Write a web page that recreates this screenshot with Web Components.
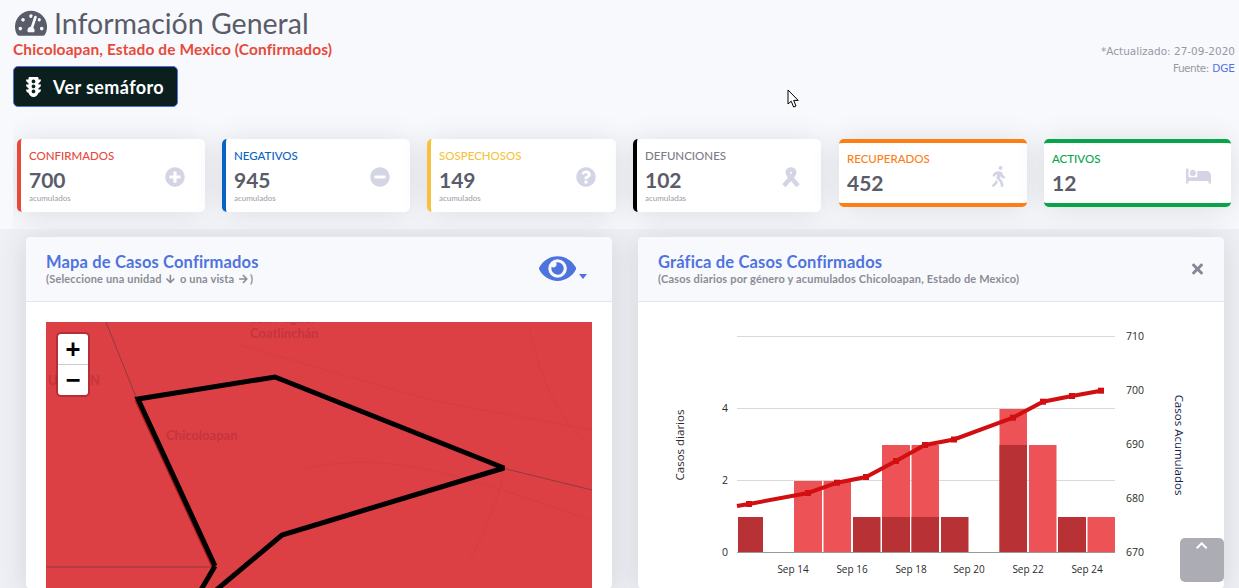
<!DOCTYPE html>
<html lang="es">
<head>
<meta charset="utf-8">
<title>Información General</title>
<style>
  html, body { margin: 0; height: 588px; overflow: hidden; }
  body { background: #f8f9fd; font-family: Lato, "Noto Sans", sans-serif; color: #5a5c69; }
</style>
</head>
<body>
<dash-page></dash-page>

<script>
const ICONS = {
  tachometer: ["0 0 576 512", "M288 32C128.94 32 0 160.94 0 320c0 52.8 14.25 102.26 39.06 144.8 5.61 9.62 16.3 15.2 27.44 15.2h443c11.14 0 21.83-5.58 27.44-15.2C561.75 422.26 576 372.8 576 320c0-159.06-128.94-288-288-288zm0 64c14.71 0 26.58 10.13 30.32 23.65-1.11 2.26-2.64 4.23-3.45 6.67l-9.22 27.67c-5.13 3.49-10.97 6.01-17.64 6.01-17.67 0-32-14.33-32-32S270.33 96 288 96zM96 384c-17.67 0-32-14.33-32-32s14.33-32 32-32 32 14.33 32 32-14.33 32-32 32zm48-160c-17.67 0-32-14.33-32-32s14.33-32 32-32 32 14.33 32 32-14.33 32-32 32zm246.77-72.41l-61.33 184C343.13 347.33 352 364.54 352 384c0 11.72-3.38 22.55-8.88 32H232.88c-5.5-9.45-8.88-20.28-8.88-32 0-33.94 26.5-61.43 59.9-63.59l61.34-184.01c4.17-12.56 17.73-19.45 30.36-15.17 12.57 4.19 19.35 17.79 15.17 30.36zm14.66 57.2l15.52-46.55c3.47-1.29 7.13-2.23 11.05-2.23 17.67 0 32 14.33 32 32s-14.33 32-32 32c-11.38-.01-20.89-6.28-26.57-15.22zM480 384c-17.67 0-32-14.33-32-32s14.33-32 32-32 32 14.33 32 32-14.33 32-32 32z"],
  traffic: ["0 0 384 512", "M384 192h-64v-37.88c37.2-13.22 64-48.38 64-90.12h-64V32c0-17.67-14.33-32-32-32H96C78.33 0 64 14.33 64 32v32H0c0 41.74 26.8 76.9 64 90.12V192H0c0 41.74 26.8 76.9 64 90.12V320H0c0 42.84 28.25 78.69 66.99 91.05C79.42 468.72 130.6 512 192 512s112.58-43.28 125.01-100.95C355.75 398.69 384 362.84 384 320h-64v-37.88c37.2-13.22 64-48.38 64-90.12zM192 416c-26.51 0-48-21.49-48-48s21.49-48 48-48 48 21.49 48 48-21.49 48-48 48zm0-128c-26.51 0-48-21.49-48-48s21.49-48 48-48 48 21.49 48 48-21.49 48-48 48zm0-128c-26.51 0-48-21.49-48-48s21.49-48 48-48 48 21.49 48 48-21.49 48-48 48z"],
  plus: ["0 0 512 512", "M256 8C119 8 8 119 8 256s111 248 248 248 248-111 248-248S393 8 256 8zm144 276c0 6.6-5.4 12-12 12h-92v92c0 6.6-5.4 12-12 12h-56c-6.6 0-12-5.4-12-12v-92h-92c-6.6 0-12-5.4-12-12v-56c0-6.6 5.4-12 12-12h92v-92c0-6.6 5.4-12 12-12h56c6.6 0 12 5.4 12 12v92h92c6.6 0 12 5.4 12 12v56z"],
  minus: ["0 0 512 512", "M256 8C119 8 8 119 8 256s111 248 248 248 248-111 248-248S393 8 256 8zM124 296c-6.6 0-12-5.4-12-12v-56c0-6.6 5.4-12 12-12h264c6.6 0 12 5.4 12 12v56c0 6.6-5.4 12-12 12H124z"],
  question: ["0 0 512 512", "M504 256c0 136.997-111.043 248-248 248S8 392.997 8 256C8 119.083 119.043 8 256 8s248 111.083 248 248zM262.655 90c-54.497 0-89.255 22.957-116.549 63.758-3.536 5.286-2.353 12.415 2.715 16.258l34.699 26.31c5.205 3.947 12.621 3.008 16.665-2.122 17.864-22.658 30.113-35.797 57.303-35.797 20.429 0 45.698 13.148 45.698 32.958 0 14.976-12.363 22.667-32.534 33.976C247.128 238.528 216 254.941 216 296v4c0 6.627 5.373 12 12 12h56c6.627 0 12-5.373 12-12v-1.333c0-28.462 83.186-29.647 83.186-106.667 0-58.002-60.165-102-116.531-102zM256 338c-25.365 0-46 20.635-46 46 0 25.364 20.635 46 46 46s46-20.636 46-46c0-25.365-20.635-46-46-46z"],
  walking: ["0 0 320 512", "M208 96c26.5 0 48-21.5 48-48S234.5 0 208 0s-48 21.5-48 48 21.5 48 48 48zm94.5 149.1l-23.3-11.8-9.7-29.4c-14.7-44.6-55.7-75.8-102.2-75.9-36-.1-55.9 10.1-93.3 25.2-21.6 8.7-39.3 25.2-49.7 46.2L17.6 213c-7.8 15.8-1.5 35 14.2 42.9 15.6 7.9 34.6 1.5 42.5-14.3L81 228c3.5-7 9.3-12.5 16.5-15.4l26.8-10.8-15.2 60.7c-5.2 20.8.4 42.9 14.9 58.8l59.9 65.4c7.2 7.9 12.3 17.4 14.9 27.7l18.3 73.3c4.3 17.1 21.7 27.6 38.8 23.3 17.1-4.3 27.6-21.7 23.3-38.8l-22.2-89c-2.6-10.3-7.7-19.9-14.9-27.7l-45.5-49.7 17.2-68.7 5.5 16.5c5.3 16.1 16.7 29.4 31.7 37l23.3 11.8c15.6 7.9 34.6 1.5 42.5-14.3 7.7-15.7 1.4-35.1-14.3-43zM73.6 385.8c-3.2 8.1-8 15.4-14.2 21.5l-50 50.1c-12.5 12.5-12.5 32.8 0 45.3s32.7 12.5 45.2 0l59.4-59.4c6.1-6.1 10.9-13.4 14.2-21.5l13.5-33.8c-55.3-60.3-38.7-41.8-47.4-53.7l-20.7 51.5z"],
  bed: ["0 0 640 512", "M176 256c44.11 0 80-35.89 80-80s-35.89-80-80-80-80 35.89-80 80 35.89 80 80 80zm352-128H304c-8.84 0-16 7.16-16 16v144H64V80c0-8.84-7.16-16-16-16H16C7.16 64 0 71.16 0 80v352c0 8.84 7.16 16 16 16h32c8.84 0 16-7.16 16-16v-48h512v48c0 8.84 7.16 16 16 16h32c8.84 0 16-7.16 16-16V240c0-61.86-50.14-112-112-112z"],
  eye: ["0 0 576 512", "M572.52 241.4C518.29 135.59 410.93 64 288 64S57.68 135.64 3.48 241.41a32.35 32.35 0 0 0 0 29.19C57.71 376.41 165.07 448 288 448s230.32-71.64 284.52-177.41a32.35 32.35 0 0 0 0-29.19zM288 400a144 144 0 1 1 144-144 143.93 143.93 0 0 1-144 144zm0-240a95.31 95.31 0 0 0-25.31 3.79 47.85 47.85 0 0 1-66.9 66.9A95.78 95.78 0 1 0 288 160z"],
  times: ["0 0 352 512", "M242.72 256l100.07-100.07c12.28-12.28 12.28-32.19 0-44.48l-22.24-22.24c-12.28-12.28-32.19-12.28-44.48 0L176 189.28 75.93 89.21c-12.28-12.28-32.19-12.28-44.48 0L9.21 111.45c-12.28 12.28-12.28 32.19 0 44.48L109.28 256 9.21 356.07c-12.28 12.28-12.28 32.19 0 44.48l22.24 22.24c12.28 12.28 32.2 12.28 44.48 0L176 322.72l100.07 100.07c12.28 12.28 32.2 12.28 44.48 0l22.24-22.24c12.28-12.28 12.28-32.19 0-44.48L242.72 256z"],
  down: ["0 0 448 512", "M413.1 222.5l22.2 22.2c9.4 9.4 9.4 24.6 0 33.9L241 473c-9.4 9.4-24.6 9.4-33.9 0L12.7 278.6c-9.4-9.4-9.4-24.6 0-33.9l22.2-22.2c9.5-9.5 25-9.3 34.3.4L184 343.4V56c0-13.3 10.7-24 24-24h32c13.3 0 24 10.7 24 24v287.4l114.8-120.5c9.3-9.8 24.8-10 34.3-.4z"],
  right: ["0 0 448 512", "M190.5 66.9l22.2-22.2c9.4-9.4 24.6-9.4 33.9 0L441 239c9.4 9.4 9.4 24.6 0 33.9L246.6 467.3c-9.4 9.4-24.6 9.4-33.9 0l-22.2-22.2c-9.5-9.5-9.3-25 .4-34.3L311.4 296H24c-13.3 0-24-10.7-24-24v-32c0-13.3 10.7-24 24-24h287.4L190.9 101.2c-9.8-9.3-10-24.8-.4-34.3z"],
  chevron: ["0 0 448 512", "M240.971 130.524l194.343 194.343c9.373 9.373 9.373 24.569 0 33.941l-22.667 22.667c-9.357 9.357-24.522 9.375-33.901.04L224 227.495 69.255 381.516c-9.379 9.335-24.544 9.317-33.901-.04l-22.667-22.667c-9.373-9.373-9.373-24.569 0-33.941L207.03 130.525c9.372-9.373 24.568-9.373 33.941-.001z"]
};

// small icon element, height comes from font-size like an icon font
class FaIcon extends HTMLElement {
  connectedCallback() {
    const shadow = this.shadowRoot || this.attachShadow({ mode: "open" });
    const name = this.getAttribute("name");
    if (name === "ribbon") {
      shadow.innerHTML = `<style>:host{display:inline-block;line-height:0}svg{height:1em;width:1em;display:block}</style>
        <svg viewBox="0 0 24 24" fill="none" stroke="currentColor" stroke-width="5.4"><path d="M3.5 22.5L14.8 9.5C17 6 15.5 3 12 3S7 6 9.2 9.5L20.5 22.5"/></svg>`;
      return;
    }
    const [box, d] = ICONS[name];
    shadow.innerHTML = `<style>:host{display:inline-block;line-height:0}svg{height:1em;display:block}</style>
      <svg viewBox="${box}" fill="currentColor"><path d="${d}"/></svg>`;
  }
}

class DashHeader extends HTMLElement {
  constructor() {
    super();
    const shadow = this.attachShadow({ mode: "open" });
    shadow.innerHTML = `
      <style>
        :host { display: flex; justify-content: space-between; align-items: flex-start; padding: 5px 4px 0 13px; height: 114px; box-sizing: border-box; }
        h1 { margin: 0; font-size: 28.5px; font-weight: 400; line-height: 36px; color: #5a5c69; display: flex; align-items: center; gap: 7px; }
        h1 fa-icon { font-size: 28.5px; margin-left: 2px; }
        h2 { margin: -2px 0 0; font-size: 15.5px; letter-spacing: .1px; font-weight: 700; line-height: 20px; color: #e74a3b; }
        button { margin-top: 7px; display: flex; align-items: center; gap: 12px; height: 41px; width: 165px; padding: 0 0 0 12px; box-sizing: border-box;
          background: #0b1f1f; color: #fff; border: 1px solid #4e73df; border-radius: 5px; font: 700 18px Lato, sans-serif; letter-spacing: .4px; }
        button fa-icon { font-size: 20px; }
        .meta { margin-top: 38px; text-align: right; font: 10.5px/17px "DejaVu Sans", sans-serif; color: #97989f; }
        .meta span { letter-spacing: -.5px; }
        a { color: #4e73df; text-decoration: none; }
      </style>
      <div>
        <h1><fa-icon name="tachometer"></fa-icon>Información General</h1>
        <h2>Chicoloapan, Estado de Mexico (Confirmados)</h2>
        <button><fa-icon name="traffic"></fa-icon>Ver semáforo</button>
      </div>
      <div class="meta">*Actualizado: 27-09-2020<br><span>Fuente:</span> <a href="#">DGE</a></div>
    `;
  }
}

class StatCard extends HTMLElement {
  constructor() {
    super();
    const shadow = this.attachShadow({ mode: "open" });
    const color = this.getAttribute("color");
    const note = this.getAttribute("note");
    shadow.innerHTML = `
      <style>
        :host { display: block; box-sizing: border-box; height: 73px; background: #fff; border-radius: 5px; border-left: 4px solid ${color};
          box-shadow: 0 2px 28px rgba(58,59,69,.15); padding: 10px 8px 0; position: relative; }
        :host([band]) { height: 68px; border-left: 0; border-top: 4px solid ${color}; border-bottom: 4px solid ${color}; padding-top: 9px; }
        .row { display: flex; justify-content: space-between; align-items: center; }
        .label { font-size: 11.5px; line-height: 14px; font-weight: 500; color: ${this.getAttribute("label-color") || color}; }
        .value { font-size: 21px; line-height: 25px; font-weight: 700; color: #5a5c69; margin-top: 4px; }
        .note { font-size: 8px; line-height: 10px; color: #9a9ba5; margin-top: 1px; }
        fa-icon { color: #d3d4e4; font-size: var(--icon-size, 20px); margin-right: var(--icon-right, 12.5px); margin-top: var(--icon-top, 2px); }
      </style>
      <div class="row">
        <div>
          <div class="label"><slot></slot></div>
          <div class="value">${this.getAttribute("value")}</div>
          ${note ? `<div class="note">${note}</div>` : ""}
        </div>
        <fa-icon name="${this.getAttribute("icon")}"></fa-icon>
      </div>
    `;
  }
}

class PanelCard extends HTMLElement {
  constructor() {
    super();
    const shadow = this.attachShadow({ mode: "open" });
    shadow.innerHTML = `
      <style>
        :host { display: block; background: #fff; border-radius: 5px; box-shadow: 0 2px 28px rgba(58,59,69,.15); overflow: hidden; }
        header { box-sizing: border-box; background: #f8f9fc; border-bottom: 1px solid #e3e6f0; padding: 16px 20px 0; display: flex; justify-content: space-between; height: 65px; }
        h3 { margin: 0; font-size: 16.5px; letter-spacing: .15px; line-height: 18px; font-weight: 700; color: #4e73df; }
        p { margin: 1px 0 0; font-size: 11px; letter-spacing: .17px; line-height: 13px; font-weight: 700; color: #8b8c96; }
        .body { padding: 20px; }
      </style>
      <header>
        <div><h3>${this.getAttribute("heading")}</h3><p><slot name="sub"></slot></p></div>
        <slot name="action"></slot>
      </header>
      <div class="body"><slot></slot></div>
    `;
  }
}

class MapView extends HTMLElement {
  constructor() {
    super();
    const shadow = this.attachShadow({ mode: "open" });
    shadow.innerHTML = `
      <style>
        :host { display: block; position: relative; height: 400px; background: #dc4045; }
        svg { display: block; width: 546px; height: 400px; }
        text { font: 700 13px Lato, sans-serif; fill: #c5353c; }
        .zoom { position: absolute; left: 12px; top: 12px; width: 30px; border-radius: 3px; background: #fff; box-shadow: 0 0 0 2px rgba(120,20,30,.4); }
        .zoom div { height: 30px; text-align: center; font: 700 24px/30px "DejaVu Sans Mono", monospace; color: #000; }
        .zoom div + div { border-top: 1px solid #ccc; }
      </style>
      <svg viewBox="46 322 546 400" fill="none">
        <g stroke="#d63c42" stroke-width="1">
          <path d="M240 345L430 400L592 430"/>
          <path d="M300 470C380 450 450 470 590 520"/>
          <path d="M470 560C490 520 510 470 500 470"/>
          <path d="M530 330C540 380 560 420 592 450"/>
        </g>
        <text x="250" y="323">San Miguel</text>
        <text x="250" y="338">Coatlinchán</text>
        <text x="48" y="385">U</text>
        <text x="90" y="385">N</text>
        <text x="166" y="440">Chicoloapan</text>
        <path d="M106 322L136 397M502 468L592 490M46 567H215" stroke="#8f3a3c" stroke-width="1"/>
        <path d="M136 400L213 567" stroke="#a91c1e" stroke-width="3"/>
        <path d="M215 566L138 399L275 377L504 468L282 535L190 612M215 566L195 600" stroke="#000" stroke-width="5" stroke-linejoin="miter" stroke-miterlimit="3"/>
      </svg>
      <div class="zoom"><div>+</div><div>−</div></div>
    `;
  }
}

class CaseChart extends HTMLElement {
  constructor() {
    super();
    const shadow = this.attachShadow({ mode: "open" });
    // positions and values read off the plot
    const starts = [738, 794, 823.5, 853, 882, 911.5, 941, 999.5, 1029, 1058, 1087.5];
    const widths = [25, 28, 27.5, 27.5, 28, 27.5, 27.5, 27.5, 27.5, 28, 27.5];
    const light = [0, 2, 2, 0, 3, 3, 0, 4, 3, 0, 1];
    const dark = [1, 0, 0, 1, 1, 1, 1, 3, 0, 1, 0];
    const y0 = 552, unit = 36;
    const bars = starts.map((x, i) => {
      let out = "";
      if (light[i]) out += `<rect x="${x}" y="${y0 - light[i] * unit + 1}" width="${widths[i]}" height="${light[i] * unit - 1}" fill="#ec5256"/>`;
      if (dark[i]) out += `<rect x="${x}" y="${y0 - dark[i] * unit + 1}" width="${widths[i]}" height="${dark[i] * unit - 1}" fill="#b83134"/>`;
      return out;
    }).join("");
    const pts = [[749, 504], [808, 493], [837, 482.7], [866, 477], [896, 461], [925, 445], [954, 439.5], [1013, 417.7], [1043, 401.7], [1072, 396], [1101, 390.7]];
    const line = "737,506 " + pts.map(p => p.join(",")).join(" ");
    const marks = pts.map(p => `<rect x="${p[0] - 3}" y="${p[1] - 3}" width="6" height="6" fill="#d10f10"/>`).join("");
    const grid = [336, 408, 480].map(y => `<path d="M737 ${y}.5H1115" stroke="#d9d9d9"/>`).join("");
    const left = [[0, 556], [2, 484], [4, 412]].map(t => `<text x="725" y="${t[1]}" text-anchor="middle">${t[0]}</text>`).join("");
    const right = [[670, 556], [680, 502], [690, 448], [700, 394], [710, 340]].map(t => `<text x="1126" y="${t[1]}">${t[0]}</text>`).join("");
    const days = [[14, 793], [16, 852], [18, 911], [20, 969], [22, 1028], [24, 1087]].map(t => `<text x="${t[1]}" y="573" text-anchor="middle" style="font-size:10px">Sep ${t[0]}</text>`).join("");
    shadow.innerHTML = `
      <style>
        :host { display: block; height: 400px; }
        svg { display: block; width: 546px; height: 400px; }
        text { font: 10.5px "Open Sans", sans-serif; fill: #2a2a2a; }
      </style>
      <svg viewBox="658 322 546 400">
        ${grid}${bars}
        <path d="M737 552.5H1115" stroke="#999"/>
        <polyline points="${line}" fill="none" stroke="#d10f10" stroke-width="4"/>
        ${marks}
        ${left}${right}${days}
        <text transform="translate(684 445) rotate(-90)" text-anchor="middle" style="font-size:11.5px">Casos diarios</text>
        <text transform="translate(1175 445) rotate(90)" text-anchor="middle" style="font-size:11.5px;fill:#10194a">Casos Acumulados</text>
      </svg>
    `;
  }
}

class ScrollTop extends HTMLElement {
  constructor() {
    super();
    const shadow = this.attachShadow({ mode: "open" });
    shadow.innerHTML = `
      <style>
        :host { position: fixed; left: 1180px; top: 538px; width: 44px; height: 44px; border-radius: 5px; background: rgba(90,92,105,.5); color: #fff; display: flex; justify-content: center; }
        fa-icon { font-size: 13px; margin-top: 1px; }
      </style>
      <fa-icon name="chevron"></fa-icon>
    `;
  }
}

class DashPage extends HTMLElement {
  constructor() {
    super();
    const shadow = this.attachShadow({ mode: "open" });
    shadow.innerHTML = `
      <style>
        :host { display: block; position: relative; font-family: Lato, "Noto Sans", sans-serif; }
        .band { margin-left: 13px; height: 115px; padding: 25px 0 0 4px; box-sizing: border-box; overflow: hidden;
          display: grid; grid-template-columns: 188px 188px 189px 188px 189px 187px; column-gap: 17px; align-items: start; }
        .band stat-card:nth-child(5) { margin-left: 1px; }
        main { background: #eff0f5; padding: 8px 15px 0 26px; display: grid; grid-template-columns: 586px 586px; column-gap: 26px; height: 360px; box-sizing: border-box; }
        .tool { color: #4e73df; display: flex; align-items: flex-end; height: 28px; margin: 4px 5px 0 0; }
        .tool .eye { font-size: 33px; margin-left: -1px; }
        .tool .caret { width: 0; height: 0; border: 4.5px solid transparent; border-top: 5px solid #4e73df; border-bottom: 0; margin: 0 0 6px 3px; }
        .close { color: #858796; font-size: 16px; margin: 8px 1px 0 0; }
        .cursor { position: absolute; left: 787px; top: 89px; }
        span fa-icon { font-size: 10px; vertical-align: -1px; margin: 0 2px; }
      </style>
      <dash-header></dash-header>
      <section class="band">
        <stat-card color="#e74a3b" value="700" note="acumulados" icon="plus">CONFIRMADOS</stat-card>
        <stat-card color="#0a63c4" value="945" note="acumulados" icon="minus">NEGATIVOS</stat-card>
        <stat-card color="#f6c23e" value="149" note="acumulados" icon="question">SOSPECHOSOS</stat-card>
        <stat-card color="#000" label-color="#7b7c88" value="102" note="acumuladas" icon="ribbon">DEFUNCIONES</stat-card>
        <stat-card band color="#fd7e14" value="452" icon="walking" style="--icon-right:14px;--icon-size:21px;--icon-top:5px">RECUPERADOS</stat-card>
        <stat-card band color="#07a54a" value="12" icon="bed" style="--icon-right:12px;--icon-top:4px">ACTIVOS</stat-card>
      </section>
      <main>
        <panel-card heading="Mapa de Casos Confirmados">
          <span slot="sub">(Seleccione una unidad <fa-icon name="down"></fa-icon> o una vista <fa-icon name="right"></fa-icon>)</span>
          <div slot="action" class="tool"><fa-icon class="eye" name="eye"></fa-icon><span class="caret"></span></div>
          <map-view></map-view>
        </panel-card>
        <panel-card heading="Gráfica de Casos Confirmados">
          <span slot="sub">(Casos diarios por género y acumulados Chicoloapan, Estado de Mexico)</span>
          <fa-icon slot="action" class="close" name="times"></fa-icon>
          <case-chart></case-chart>
        </panel-card>
      </main>
      <scroll-top></scroll-top>
      <svg class="cursor" width="14" height="20" viewBox="0 0 14 20"><path d="M1 1V15L4.2 12.2L6.6 18L9 17L6.7 11.4H11.2Z" fill="#fff" stroke="#000" stroke-width="1"/></svg>
    `;
  }
}

customElements.define("fa-icon", FaIcon);
customElements.define("dash-header", DashHeader);
customElements.define("stat-card", StatCard);
customElements.define("panel-card", PanelCard);
customElements.define("map-view", MapView);
customElements.define("case-chart", CaseChart);
customElements.define("scroll-top", ScrollTop);
customElements.define("dash-page", DashPage);
</script>
</body>
</html>
